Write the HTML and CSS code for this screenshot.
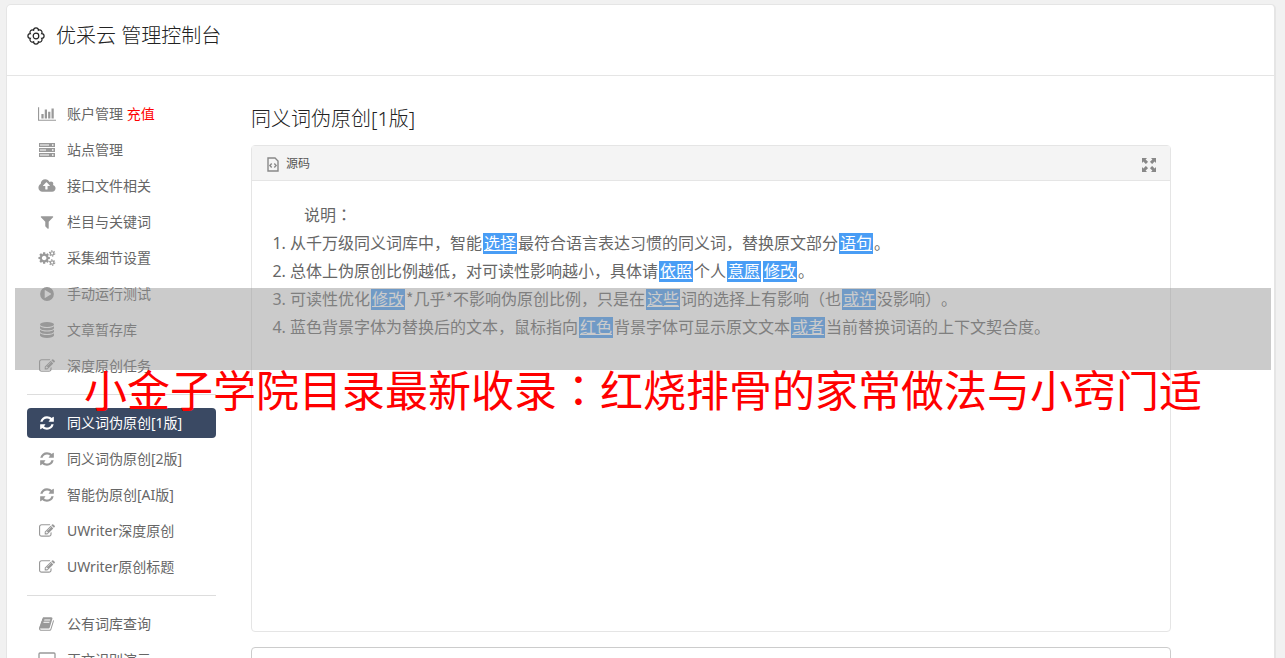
FILE: index.html
```html
<!DOCTYPE html>
<html lang="zh-CN">
<head>
    <meta charset="UTF-8">
    <meta name="viewport" content="width=device-width, initial-scale=1">
    <title>优采云 管理控制台</title>
    <link rel="stylesheet" href="styles.css">
</head>
<body>

    <!-- 图标 -->
    <svg class="sprite" aria-hidden="true">
        <symbol id="i-gear" viewBox="0 0 18 18">
            <g fill="none" stroke="currentColor" stroke-width="1.2">
                <path d="M14.700 6.600A2.400 2.400 0 0 1 14.700 11.400A2.400 2.400 0 0 1 11.400 14.700A2.400 2.400 0 0 1 6.600 14.700A2.400 2.400 0 0 1 3.300 11.400A2.400 2.400 0 0 1 3.300 6.600A2.400 2.400 0 0 1 6.600 3.300A2.400 2.400 0 0 1 11.400 3.300A2.400 2.400 0 0 1 14.700 6.600z"/>
                <circle cx="9" cy="9" r="2.800"/>
            </g>
        </symbol>
        <symbol id="i-chart" viewBox="0 0 2048 1792">
            <path d="M640 896v512h-256v-512h256zm384-512v1024h-256v-1024h256zm1024 1152v128h-2048v-1536h128v1408h1920zm-640-896v768h-256v-768h256zm384-384v1152h-256v-1152h256z"/>
        </symbol>
        <symbol id="i-server" viewBox="0 0 18 16">
            <path fill-rule="evenodd" d="M1 1h16v4H1zM2 2.500h9v1H2zM14 2.300h1.500v1.400H14zM1 6h16v4H1zM2 7.500h6v1H2zM14 7.300h1.500v1.400H14zM1 11h16v4H1zM2 12.500h9v1H2zM14 12.300h1.500v1.400H14z"/>
        </symbol>
        <symbol id="i-cloud" viewBox="0 0 1920 1792">
            <path d="M1280 864q0-14-9-23l-352-352q-9-9-23-9t-23 9l-351 351q-10 12-10 24 0 14 9 23t23 9h224v352q0 13 9.500 22.500t22.500 9.500h192q13 0 22.500-9.500t9.500-22.500v-352h224q13 0 22.500-9.500t9.500-22.500zm640 288q0 159-112.500 271.500t-271.500 112.500h-1088q-185 0-316.500-131.500t-131.500-316.500q0-130 70-240t188-165q-2-30-2-43 0-212 150-362t362-150q156 0 285.500 87t188.500 231q71-62 166-62 106 0 181 75t75 181q0 76-41 138 130 31 213.500 135.500t83.500 238.500z"/>
        </symbol>
        <symbol id="i-filter" viewBox="0 0 1792 1792">
            <path d="M1595 295q17 41-14 70l-493 493v742q0 42-39 59-13 5-25 5-27 0-45-19l-256-256q-19-19-19-45v-486l-493-493q-31-29-14-70 17-39 59-39h1280q42 0 59 39z"/>
        </symbol>
        <symbol id="i-cogs" viewBox="0 0 1920 1792">
            <path d="M896 896q0-106-75-181t-181-75-181 75-75 181 75 181 181 75 181-75 75-181zm384-91v185q0 10-7 19.500t-16 10.500l-155 24q-11 35-32 76 34 48 90 115 7 11 7 20 0 12-7 19-23 30-82.500 89.500t-78.500 59.500q-11 0-21-7l-115-90q-37 19-77 31-11 108-23 155-7 24-30 24h-186q-11 0-20-7.500t-10-17.500l-23-153q-34-10-75-31l-118 89q-7 7-20 7-11 0-21-8-144-133-144-160 0-9 7-19 10-14 41-53t47-61q-23-44-35-82l-152-24q-10-1-17-9.500t-7-19.500v-185q0-10 7-19.500t16-10.500l155-24q11-35 32-76-34-48-90-115-7-11-7-20 0-12 7-20 22-30 82-89t79-59q11 0 21 7l115 90q34-18 77-32 11-108 23-154 7-24 30-24h186q11 0 20 7.500t10 17.500l23 153q34 10 75 31l118-89q8-7 20-7 11 0 21 8 144 133 144 160 0 8-7 19-12 16-42 54t-45 60q23 48 34 82l152 23q10 2 17 10.500t7 19.500z"/>
            <g fill="none" stroke="currentColor">
                <circle cx="1536" cy="384" r="190" stroke-width="130"/>
                <circle cx="1536" cy="384" r="300" stroke-width="120" stroke-dasharray="157 157"/>
                <circle cx="1536" cy="1408" r="190" stroke-width="130"/>
                <circle cx="1536" cy="1408" r="300" stroke-width="120" stroke-dasharray="157 157"/>
            </g>
        </symbol>
        <symbol id="i-play" viewBox="0 0 16 16">
            <path fill-rule="evenodd" d="M8 1.100a6.900 6.900 0 1 1 0 13.800a6.900 6.900 0 1 1 0-13.800zM5.700 4.600v6.800q0 .8.700.4l5.400-3.300q.7-.5 0-1L6.400 4.200q-.7-.4-.7.400z"/>
        </symbol>
        <symbol id="i-database" viewBox="0 0 16 16">
            <ellipse cx="8" cy="2.500" rx="7" ry="2.500"/>
            <path d="M1 4.200q2 1.800 7 1.800t7-1.800v2.100q-1 2.200-7 2.200t-7-2.200zM1 7.700q2 1.800 7 1.800t7-1.800v2.100q-1 2.200-7 2.200t-7-2.200zM1 11.200q2 1.800 7 1.800t7-1.800v2.300q-1 2.400-7 2.400t-7-2.400z"/>
        </symbol>
        <symbol id="i-edit" viewBox="0 0 1792 1792">
            <path d="M888 1184l116-116-152-152-116 116v56h96v96h56zm440-720q-16-16-33 1l-350 350q-17 17-1 33t33-1l350-350q17-17 1-33zm80 594v190q0 119-84.500 203.500t-203.500 84.500h-832q-119 0-203.500-84.500t-84.500-203.500v-832q0-119 84.500-203.500t203.500-84.500h832q63 0 117 25 15 7 18 23 3 17-9 29l-49 49q-14 14-32 8-23-6-45-6h-832q-66 0-113 47t-47 113v832q0 66 47 113t113 47h832q66 0 113-47t47-113v-126q0-13 9-22l64-64q15-15 35-7t20 29zm-96-738l288 288-672 672h-288v-288zm444 132l-92 92-288-288 92-92q28-28 68-28t68 28l152 152q28 28 28 68t-28 68z"/>
        </symbol>
        <symbol id="i-refresh" viewBox="0 0 1792 1792">
            <path d="M1639 1056q0 5-1 7-64 268-268 434.500t-478 166.500q-146 0-282.500-55t-243.500-157l-129 129q-19 19-45 19t-45-19-19-45v-448q0-26 19-45t45-19h448q26 0 45 19t19 45-19 45l-137 137q71 66 161 102t187 36q134 0 250-65t186-179q11-17 53-117 8-23 30-23h192q13 0 22.500 9.500t9.500 22.500zm25-800v448q0 26-19 45t-45 19h-448q-26 0-45-19t-19-45 19-45l138-138q-148-137-349-137-134 0-250 65t-186 179q-11 17-53 117-8 23-30 23h-199q-13 0-22.500-9.500t-9.500-22.500v-7q65-268 270-434.500t480-166.500q146 0 284 55.500t245 156.500l130-129q19-19 45-19t45 19 19 45z"/>
        </symbol>
        <symbol id="i-book" viewBox="0 0 1792 1792">
            <path d="M1639 478q40 57 18 129l-275 906q-19 64-76.500 107.500t-122.500 43.500h-923q-77 0-148.500-53.500t-99.500-131.500q-24-67-2-127 0-4 3-27t4-37q1-8-3-21.500t-3-19.500q2-11 8-21t16.500-23.500 16.500-23.500q23-38 45-91.500t30-91.500q3-10 .5-30t-.5-28q3-11 17-28t17-23q21-36 42-92t25-90q1-9-2.500-32t.5-28q4-13 22-30.500t22-22.500q19-26 42.500-84.500t27.500-96.500q1-8-3-25.500t-2-26.500q2-8 9-18t18-23 17-21q8-12 16.500-30.500t15-35 16-36 19.500-32 26.500-23.500 36-11.500 47.500 5.500l-1 3q38-9 51-9h761q74 0 114 56t18 130l-274 906q-36 119-71.500 153.500t-128.500 34.500h-869q-27 0-38 15-11 16-1 43 24 70 144 70h923q29 0 56-15.500t35-41.500l300-987q7-22 5-57 38 15 59 43zm-1064 2q-4 13 2 22.500t20 9.500h608q13 0 25.500-9.500t16.500-22.500l21-64q4-13-2-22.500t-20-9.500h-608q-13 0-25.500 9.500t-16.500 22.500zm-83 256q-4 13 2 22.500t20 9.500h608q13 0 25.500-9.500t16.500-22.500l21-64q4-13-2-22.500t-20-9.500h-608q-13 0-25.500 9.500t-16.500 22.500z"/>
        </symbol>
        <symbol id="i-desktop" viewBox="0 0 18 16">
            <path fill="none" stroke="currentColor" stroke-width="1.300" d="M2 1h14q1 0 1 1v9q0 1-1 1H2q-1 0-1-1V2q0-1 1-1zM6 15h6M9 12v3"/>
        </symbol>
        <symbol id="i-source" viewBox="0 0 12 15">
            <path fill="none" stroke="currentColor" stroke-width="1.400" d="M1 1h7l3 3v10H1zM4.700 6.500L2.900 8.500l1.800 2M7.300 6.500l1.800 2-1.800 2"/>
        </symbol>
        <symbol id="i-expand" viewBox="0 0 14 14">
            <path d="M0 0h5L3.600 1.400 6 3.800 5 5 3.800 6 1.400 3.600 0 5zM14 0v5l-1.400-1.400L10.200 6 9 5 8 3.800l2.400-2.400L9 0zM0 14V9l1.400 1.400L3.800 8 5 9l1 1.200-2.400 2.400L5 14zM14 14H9l1.400-1.400L8 10.200 9 9l1.200-1 2.400 2.400L14 9z"/>
        </symbol>
    </svg>

    <div class="panel">
        <header class="panel-header">
            <svg class="logo"><use href="#i-gear"/></svg>
            <h1>优采云 管理控制台</h1>
        </header>

        <div class="panel-body">
            <nav class="sidebar">
                <a href="#"><svg class="wide"><use href="#i-chart"/></svg><span>账户管理 <em>充值</em></span></a>
                <a href="#"><svg class="wide"><use href="#i-server"/></svg>站点管理</a>
                <a href="#"><svg class="wide"><use href="#i-cloud"/></svg>接口文件相关</a>
                <a href="#"><svg><use href="#i-filter"/></svg>栏目与关键词</a>
                <a href="#"><svg class="wide"><use href="#i-cogs"/></svg>采集细节设置</a>
                <a href="#"><svg><use href="#i-play"/></svg>手动运行测试</a>
                <a href="#"><svg><use href="#i-database"/></svg>文章暂存库</a>
                <a href="#"><svg><use href="#i-edit"/></svg>深度原创任务</a>
                <hr>
                <a href="#" class="active"><svg><use href="#i-refresh"/></svg>同义词伪原创[1版]</a>
                <a href="#"><svg><use href="#i-refresh"/></svg>同义词伪原创[2版]</a>
                <a href="#"><svg><use href="#i-refresh"/></svg>智能伪原创[AI版]</a>
                <a href="#"><svg><use href="#i-edit"/></svg>UWriter深度原创</a>
                <a href="#"><svg><use href="#i-edit"/></svg>UWriter原创标题</a>
                <hr>
                <a href="#"><svg><use href="#i-book"/></svg>公有词库查询</a>
                <a href="#"><svg class="wide"><use href="#i-desktop"/></svg>正文识别演示</a>
            </nav>

            <main class="content">
                <h2>同义词伪原创[1版]</h2>

                <div class="editor">
                    <div class="toolbar">
                        <button type="button"><svg class="source"><use href="#i-source"/></svg>源码</button>
                        <button type="button" aria-label="全屏"><svg class="expand"><use href="#i-expand"/></svg></button>
                    </div>
                    <div class="editor-body">
                        <p>说明<span class="mark" lang="zh-TW">：</span></p>
                        <ol>
                            <li>从千万级同义词库中，智能<a href="#">选择</a>最符合语言表达习惯的同义词，替换原文部分<a href="#">语句</a>。</li>
                            <li>总体上伪原创比例越低，对可读性影响越小，具体请<a href="#">依照</a>个人<a href="#">意愿</a><a href="#">修改</a>。</li>
                            <li>可读性优化<a href="#">修改</a><span class="mark">*</span>几乎<span class="mark">*</span>不影响伪原创比例，只是在<a href="#">这些</a>词的选择上有影响（也<a href="#">或许</a>没影响）。</li>
                            <li>蓝色背景字体为替换后的文本，鼠标指向<a href="#">红色</a>背景字体可显示原文文本<a href="#">或者</a>当前替换词语的上下文契合度。</li>
                        </ol>
                    </div>
                </div>

                <textarea class="result" aria-label="结果"></textarea>
            </main>
        </div>
    </div>

    <div class="banner">
        <div class="banner-strip"></div>
        <p>小金子学院目录最新收录<span class="mark" lang="zh-TW">：</span>红烧排骨的家常做法与小窍门适</p>
    </div>

</body>
</html>
```
FILE: styles.css
```css
* {
    box-sizing: border-box;
}

body {
    position: relative;
    height: 100vh;
    margin: 0;
    padding: 4px 9px 0 6px;
    overflow: hidden;
    background-color: #f1f1f1;
    color: #666;
    font-family: "Noto Sans", "Noto Sans CJK SC", sans-serif;
    font-size: 14px;
    text-spacing-trim: space-all;
}

h1, h2, p {
    margin: 0;
    font-weight: 300;
}

svg {
    fill: currentColor;
}

.sprite {
    display: none;
}

.panel {
    background-color: #fff;
    border: 1px solid #e5e5e5;
    border-right-width: 2px;
    border-radius: 5px;
}

.panel-header {
    display: flex;
    align-items: center;
    gap: 11px;
    height: 71px;
    padding: 0 20px 8px;
    border-bottom: 1px solid #e5e5e5;
    color: #222;
}

.panel-header h1 {
    font-size: 20px;
    line-height: 28px;
}

.logo {
    width: 18px;
    height: 18px;
}

.panel-body {
    display: flex;
    gap: 35px;
    padding: 23px 20px;
}

/* 左侧菜单 */
.sidebar {
    display: flex;
    flex-direction: column;
    flex: none;
    gap: 6px;
    width: 189px;
}

.sidebar a {
    display: flex;
    align-items: center;
    gap: 12px;
    height: 30px;
    padding: 0 12px;
    border-radius: 4px;
    color: #666;
    line-height: 30px;
    text-decoration: none;
    white-space: nowrap;
}

.sidebar svg {
    width: 16px;
    height: 16px;
    color: #999;
}

.sidebar svg.wide {
    width: 18px;
    margin: 0 -1px;
}

.sidebar em {
    color: #f00;
    font-style: normal;
}

.sidebar .active {
    background-color: #3a4963;
    color: #fff;
}

.sidebar .active svg {
    color: #fff;
}

.sidebar hr {
    width: 100%;
    height: 1px;
    margin: 7px 0;
    border: 0;
    background-color: #ddd;
}

/* 内容区 */
.content {
    flex: 1;
    max-width: 920px;
}

.content h2 {
    margin-bottom: 12px;
    padding-top: 6px;
    color: #222;
    font-size: 20px;
    line-height: 28px;
}

.editor {
    border: 1px solid #e5e5e5;
    border-radius: 4px;
}

.toolbar {
    display: flex;
    justify-content: space-between;
    align-items: center;
    height: 35px;
    padding: 0 14px 0 15px;
    background-color: #f4f4f4;
    border-bottom: 1px solid #e5e5e5;
}

.toolbar button {
    display: flex;
    align-items: center;
    gap: 7px;
    padding: 0;
    background: none;
    border: 0;
    color: #555;
    font: inherit;
    font-size: 12px;
    cursor: pointer;
}

.toolbar svg {
    margin-top: 3px;
    color: #888;
}

.source {
    width: 12px;
    height: 15px;
}

.expand {
    width: 14px;
    height: 14px;
}

.editor-body {
    min-height: 450px;
    padding: 20px;
    font-size: 16px;
    line-height: 28px;
}

.editor-body p {
    padding-left: 32px;
    font-weight: 400;
}

.editor-body ol {
    margin: 0;
    padding-left: 18px;
}

.editor-body a {
    display: inline-block;
    margin: 0 1px;
    padding: 0 1px;
    background-color: #499df5;
    color: #fff;
    line-height: 21px;
}

/* 居中标点 */
.mark {
    font-family: "Noto Sans CJK TC", sans-serif;
    line-height: 1;
}

.result {
    display: block;
    width: 100%;
    height: 120px;
    margin-top: 15px;
    border: 1px solid #ccc;
    border-radius: 4px;
    resize: none;
}

/* 覆盖在页面上的横幅 */
.banner {
    position: absolute;
    top: 288px;
    left: 15px;
    right: 14px;
    pointer-events: none;
}

.banner-strip {
    height: 82px;
    background-color: rgba(152, 152, 152, 0.5);
}

.banner p {
    color: #f00;
    font-size: 43px;
    font-weight: 400;
    line-height: 36px;
    text-align: center;
    white-space: nowrap;
}

.banner .mark {
    line-height: 36px;
}
```
